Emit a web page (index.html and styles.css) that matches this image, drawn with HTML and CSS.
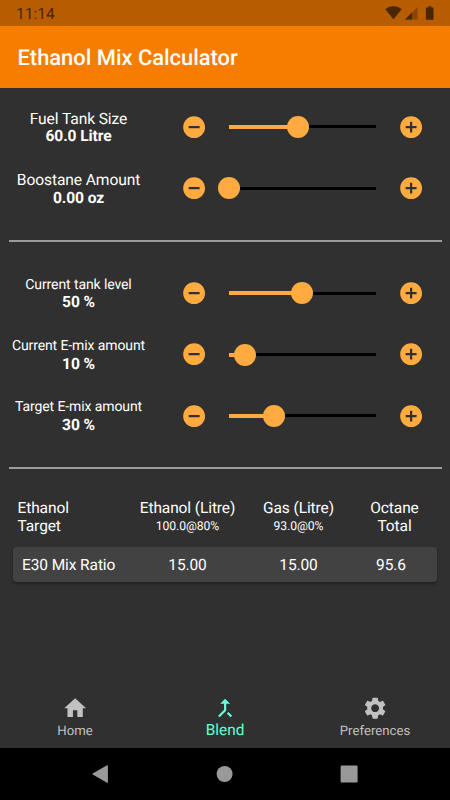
FILE: index.html
```html
<!DOCTYPE html>
<html lang="en">
<head>
    <meta charset="UTF-8" />
    <meta name="viewport" content="width=device-width, initial-scale=1.0" />
    <title>Ethanol Mix Calculator</title>
    <link rel="stylesheet" href="styles.css">
</head>
<body>

    <!-- shared button icons -->
    <svg class="sprites">
        <symbol id="minus" viewBox="0 0 24 24">
            <path d="M12 2C6.48 2 2 6.48 2 12s4.48 10 10 10 10-4.48 10-10S17.52 2 12 2zm5 11H7v-2h10v2z"/>
        </symbol>
        <symbol id="plus" viewBox="0 0 24 24">
            <path d="M12 2C6.48 2 2 6.48 2 12s4.48 10 10 10 10-4.48 10-10S17.52 2 12 2zm5 11h-4v4h-2v-4H7v-2h4V7h2v4h4v2z"/>
        </symbol>
    </svg>

    <div class="status-bar">
        <span class="time">11:14</span>
        <svg class="status-icons" width="52" height="16" viewBox="0 0 52 16">
            <path d="M0.3 4.2C2.5 2.3 5.2 1.3 8.5 1.3s6 1 8.2 2.9L8.5 14.2z"/>
            <path class="faint" d="M32.6 2v12.5H20z"/>
            <path d="M27 7.6v6.9H20z"/>
            <path d="M43.3 1.2h3v1.2h2.2v12.4h-7.6V2.4h2.4z"/>
        </svg>
    </div>

    <header class="app-bar">
        <h1>Ethanol Mix Calculator</h1>
    </header>

    <main>
        <section class="group">
            <div class="control">
                <div class="label">Fuel Tank Size<b>60.0 Litre</b></div>
                <button aria-label="Decrease"><svg><use href="#minus"/></svg></button>
                <div class="slider" style="--value: 46.9%"><div class="fill"></div><div class="thumb"></div></div>
                <button aria-label="Increase"><svg><use href="#plus"/></svg></button>
            </div>
            <div class="control">
                <div class="label">Boostane Amount<b>0.00 oz</b></div>
                <button aria-label="Decrease"><svg><use href="#minus"/></svg></button>
                <div class="slider" style="--value: 0%"><div class="fill"></div><div class="thumb"></div></div>
                <button aria-label="Increase"><svg><use href="#plus"/></svg></button>
            </div>
        </section>

        <hr>

        <section class="group small">
            <div class="control">
                <div class="label">Current tank level<b>50 %</b></div>
                <button aria-label="Decrease"><svg><use href="#minus"/></svg></button>
                <div class="slider" style="--value: 50%"><div class="fill"></div><div class="thumb"></div></div>
                <button aria-label="Increase"><svg><use href="#plus"/></svg></button>
            </div>
            <div class="control">
                <div class="label">Current E-mix amount<b>10 %</b></div>
                <button aria-label="Decrease"><svg><use href="#minus"/></svg></button>
                <div class="slider" style="--value: 10.7%"><div class="fill"></div><div class="thumb"></div></div>
                <button aria-label="Increase"><svg><use href="#plus"/></svg></button>
            </div>
            <div class="control">
                <div class="label">Target E-mix amount<b>30 %</b></div>
                <button aria-label="Decrease"><svg><use href="#minus"/></svg></button>
                <div class="slider" style="--value: 30.5%"><div class="fill"></div><div class="thumb"></div></div>
                <button aria-label="Increase"><svg><use href="#plus"/></svg></button>
            </div>
        </section>

        <hr>

        <section class="results">
            <div class="result-row head">
                <div>Ethanol<br>Target</div>
                <div>Ethanol (Litre)<small>100.0@80%</small></div>
                <div>Gas (Litre)<small>93.0@0%</small></div>
                <div>Octane<br>Total</div>
            </div>
            <div class="result-row card">
                <div>E30 Mix Ratio</div>
                <div>15.00</div>
                <div>15.00</div>
                <div>95.6</div>
            </div>
        </section>
    </main>

    <nav class="tabs">
        <a class="tab">
            <svg viewBox="0 0 24 24"><path d="M10 20v-6h4v6h5v-8h3L12 3 2 12h3v8z"/></svg>
            <span>Home</span>
        </a>
        <a class="tab active">
            <svg viewBox="0 0 24 24"><path d="M17 20.41L18.41 19 15 15.59 13.59 17 17 20.41zM7.5 8H11v5.59L5.59 19 7 20.41l6-6V8h3.5L12 3.5 7.5 8z"/></svg>
            <span>Blend</span>
        </a>
        <a class="tab">
            <svg viewBox="0 0 24 24"><path d="M19.14 12.94c.04-.3.06-.61.06-.94 0-.32-.02-.64-.07-.94l2.03-1.58c.18-.14.23-.41.12-.61l-1.92-3.32c-.12-.22-.37-.29-.59-.22l-2.39.96c-.5-.38-1.03-.7-1.62-.94l-.36-2.54c-.04-.24-.24-.41-.48-.41h-3.84c-.24 0-.43.17-.47.41l-.36 2.54c-.59.24-1.13.57-1.62.94l-2.39-.96c-.22-.08-.47 0-.59.22L2.74 8.87c-.12.21-.08.47.12.61l2.03 1.58c-.05.3-.09.63-.09.94s.02.64.07.94l-2.03 1.58c-.18.14-.23.41-.12.61l1.92 3.32c.12.22.37.29.59.22l2.39-.96c.5.38 1.03.7 1.62.94l.36 2.54c.05.24.24.41.48.41h3.84c.24 0 .44-.17.47-.41l.36-2.54c.59-.24 1.13-.56 1.62-.94l2.39.96c.22.08.47 0 .59-.22l1.92-3.32c.12-.22.07-.47-.12-.61l-2.01-1.58zM12 15.6c-1.98 0-3.6-1.62-3.6-3.6s1.62-3.6 3.6-3.6 3.6 1.62 3.6 3.6-1.62 3.6-3.6 3.6z"/></svg>
            <span>Preferences</span>
        </a>
    </nav>

    <div class="system-bar">
        <svg viewBox="0 0 18 20"><path d="M16.9 1.9v16.6q0 .8-.8.3L1.7 10.6q-.8-.5 0-1L16.1 1.2q.8-.4.8.7z"/></svg>
        <svg viewBox="0 0 18 20"><circle cx="9.6" cy="10" r="8"/></svg>
        <svg viewBox="0 0 18 20"><rect x="0.6" y="1.5" width="17" height="17" rx="1.2"/></svg>
    </div>

</body>
</html>
```

FILE: styles.css
```css
* {
    box-sizing: border-box;
}

body {
    font-family: Roboto, Arial, sans-serif;
    text-rendering: geometricPrecision;
    background: #303030;
    color: #fff;
    margin: 0;
    height: 100vh;
    display: flex;
    flex-direction: column;
    overflow: hidden;
}

.sprites {
    display: none;
}

.status-bar {
    height: 26px;
    flex-shrink: 0;
    background: #b75d00;
    color: #492500;
    display: flex;
    align-items: center;
    justify-content: space-between;
    padding: 2px 15px 0 16px;
    font-size: 15.6px;
}

.status-icons {
    margin: 0 -2px 2px 0;
    fill: #492500;
}

.status-icons .faint {
    fill: #8a4600;
}

.app-bar {
    height: 61.5px;
    flex-shrink: 0;
    background: #f77d00;
    display: flex;
    align-items: center;
    padding: 3px 0 0 17.5px;
}

h1 {
    margin: 0;
    font-size: 21.9px;
    font-weight: 500;
}

main {
    flex: 1;
    padding: 8.7px 8.5px 0;
}

.control {
    height: 61.25px;
    display: flex;
    align-items: center;
}

.label {
    width: 140px;
    padding-top: 3px;
    text-align: center;
    font-size: 15.6px;
    letter-spacing: -0.1px;
    line-height: 17.5px;
    white-space: nowrap;
}

.label b {
    display: block;
    font-size: 15.6px;
}

.small .label {
    padding-top: 2px;
    font-size: 14px;
}

button {
    width: 26.25px;
    height: 26.25px;
    padding: 0;
    border: none;
    background: none;
    cursor: pointer;
}

button svg {
    display: block;
    width: 100%;
    height: 100%;
    fill: #ffab40;
}

.label + button {
    margin-left: 32px;
}

.slider {
    position: relative;
    width: 147px;
    height: 3px;
    margin: 0 21.8px 0 22.2px;
    background: #000;
}

.fill {
    position: absolute;
    left: 0;
    top: -0.5px;
    width: var(--value);
    height: 4px;
    background: #ffab40;
}

.thumb {
    position: absolute;
    left: var(--value);
    top: 50%;
    width: 22px;
    height: 22px;
    border-radius: 50%;
    background: #ffab40;
    transform: translate(-50%, -50%);
}

hr {
    height: 2px;
    border: none;
    background: #9a9a9a;
    margin: 21px 0;
}

.results {
    padding: 10px 4.5px 0;
}

.result-row {
    display: grid;
    grid-template-columns: 119px 111px 111px 81px;
    font-size: 15.5px;
    letter-spacing: -0.1px;
    line-height: 17.5px;
    text-align: center;
}

.result-row div:first-child {
    text-align: left;
}

.head {
    padding-bottom: 12px;
}

.head div:first-child {
    padding-left: 4.5px;
}

.head small {
    display: block;
    font-size: 12.2px;
    line-height: 16px;
}

.card {
    height: 35px;
    padding-top: 1px;
    align-items: center;
    background: #424242;
    border-radius: 4px;
    box-shadow: 0 2px 3px rgba(0, 0, 0, 0.3);
}

.card div:first-child {
    padding-left: 9px;
}

.card div:last-child {
    padding-right: 7px;
}

.tabs {
    height: 61.5px;
    flex-shrink: 0;
    display: flex;
}

.tab {
    flex: 1;
    display: flex;
    flex-direction: column;
    align-items: center;
    padding-top: 9px;
    color: #c1c1c1;
    font-size: 13.2px;
    line-height: 22px;
}

.tab svg {
    width: 26.25px;
    height: 26.25px;
    fill: currentColor;
}

.tab.active {
    color: #64ffda;
    font-size: 15.4px;
    line-height: 19px;
}

.system-bar {
    height: 52.5px;
    flex-shrink: 0;
    background: #000;
    display: flex;
    align-items: center;
    justify-content: center;
    gap: 106.5px;
    padding-right: 1.5px;
}

.system-bar svg {
    width: 18px;
    height: 20px;
    fill: #999;
}
```
